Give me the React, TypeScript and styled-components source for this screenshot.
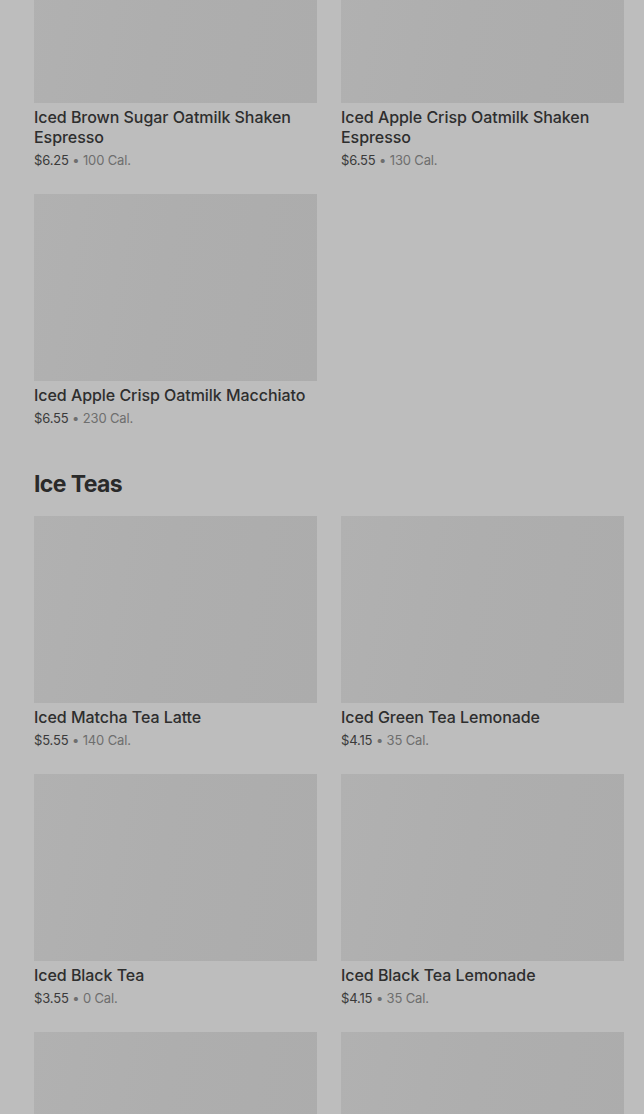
import styled, { createGlobalStyle } from "styled-components";

interface MenuItem {
    name?: string;
    price?: string;
    calories?: string;
}

interface MenuSection {
    title?: string;
    items: MenuItem[];
}

const sections: MenuSection[] = [
    {
        items: [
            { name: "Iced Brown Sugar Oatmilk Shaken Espresso", price: "$6.25", calories: "100 Cal." },
            { name: "Iced Apple Crisp Oatmilk Shaken Espresso", price: "$6.55", calories: "130 Cal." },
            { name: "Iced Apple Crisp Oatmilk Macchiato", price: "$6.55", calories: "230 Cal." },
        ],
    },
    {
        title: "Ice Teas",
        items: [
            { name: "Iced Matcha Tea Latte", price: "$5.55", calories: "140 Cal." },
            { name: "Iced Green Tea Lemonade", price: "$4.15", calories: "35 Cal." },
            { name: "Iced Black Tea", price: "$3.55", calories: "0 Cal." },
            { name: "Iced Black Tea Lemonade", price: "$4.15", calories: "35 Cal." },
            // below the fold: only the pictures show
            {},
            {},
        ],
    },
];

const GlobalStyle = createGlobalStyle`
    html, body {
        margin: 0;
        padding: 0;
        background: #bdbdbd;
        overflow: hidden;
    }

    body {
        font-family: Inter, "Noto Sans", "Liberation Sans", sans-serif;
        -webkit-font-smoothing: antialiased;
    }
`;

const Viewport = styled.div`
    height: 1114px;
    overflow: hidden;
`;

// the page is scrolled: the first row's pictures are cut at the top
const Page = styled.main`
    margin-top: -84px;
    padding: 0 20px 0 34px;
`;

const Section = styled.section`
    & + & {
        padding-top: 39px;
    }
`;

const SectionTitle = styled.h2`
    margin: 0 0 17px;
    font-size: 23px;
    line-height: 32px;
    font-weight: 700;
    letter-spacing: -0.6px;
    color: #2a2a2a;
    transform: translateY(1px);
`;

const Grid = styled.div`
    display: grid;
    grid-template-columns: repeat(2, 283px);
    column-gap: 24px;
    row-gap: 24px;
`;

const Card = styled.article`
    display: flex;
    flex-direction: column;
    min-width: 0;
`;

const Picture = styled.div`
    height: 187px;
    background: linear-gradient(100deg, #b1b1b1 0%, #aeaeae 45%, #acacac 100%);
`;

const Name = styled.h3`
    margin: 4px 0 0;
    font-size: 16px;
    line-height: 20px;
    font-weight: 500;
    letter-spacing: -0.05px;
    color: #2e2e2e;
`;

const Meta = styled.p`
    margin: 3px 0 0;
    font-size: 13px;
    line-height: 20px;
    letter-spacing: -0.15px;
    color: #3a3a3a;
`;

const Muted = styled.span`
    color: #6e6e6e;
`;

const ItemCard = ({ item }: { item: MenuItem }) => (
    <Card>
        <Picture />
        {item.name && <Name>{item.name}</Name>}
        {item.price && (
            <Meta>
                {item.price}
                <Muted> • {item.calories}</Muted>
            </Meta>
        )}
    </Card>
);

export default function App() {
    return (
        <Viewport>
            <GlobalStyle />
            <Page>
                {sections.map((section, i) => (
                    <Section key={i}>
                        {section.title && (
                            <SectionTitle>{section.title}</SectionTitle>
                        )}
                        <Grid>
                            {section.items.map((item, j) => (
                                <ItemCard key={j} item={item} />
                            ))}
                        </Grid>
                    </Section>
                ))}
            </Page>
        </Viewport>
    );
}
